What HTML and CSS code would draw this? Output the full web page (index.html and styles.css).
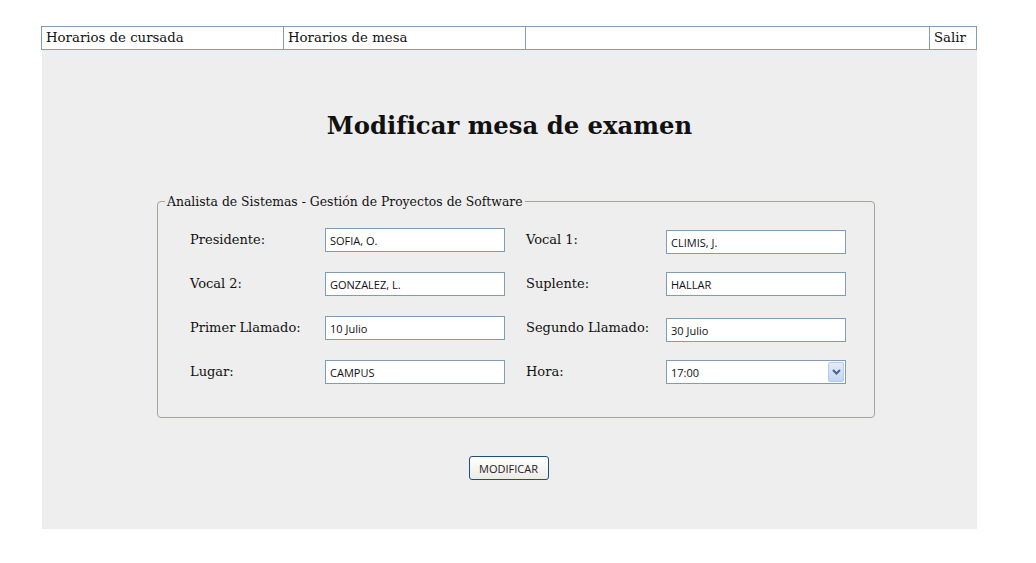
FILE: index.html
```html
<!DOCTYPE html>
<html lang="es">
<head>
<meta charset="utf-8">
<title>Modificar mesa de examen</title>
<link rel="stylesheet" href="styles.css">
</head>
<body>
<div class="page">
  <table class="nav">
    <tr>
      <td class="c1">Horarios de cursada</td>
      <td class="c2">Horarios de mesa</td>
      <td class="c3"></td>
      <td class="c4">Salir</td>
    </tr>
  </table>
  <div class="panel">
    <h1 class="title">Modificar mesa de examen</h1>
    <fieldset class="box">
      <legend class="legend">Analista de Sistemas - Gestión de Proyectos de Software</legend>
      <div class="grid">
        <div class="lbl">Presidente:</div>
        <div class="cell"><input class="inp" type="text" value="SOFIA, O."></div>
        <div class="lbl">Vocal 1:</div>
        <div class="cell down"><input class="inp" type="text" value="CLIMIS, J."></div>

        <div class="lbl">Vocal 2:</div>
        <div class="cell"><input class="inp" type="text" value="GONZALEZ, L."></div>
        <div class="lbl">Suplente:</div>
        <div class="cell"><input class="inp" type="text" value="HALLAR"></div>

        <div class="lbl">Primer Llamado:</div>
        <div class="cell"><input class="inp" type="text" value="10 Julio"></div>
        <div class="lbl">Segundo Llamado:</div>
        <div class="cell down"><input class="inp" type="text" value="30 Julio"></div>

        <div class="lbl">Lugar:</div>
        <div class="cell"><input class="inp" type="text" value="CAMPUS"></div>
        <div class="lbl">Hora:</div>
        <div class="cell">
          <div class="sel">
            <span class="sel-val">17:00</span>
            <span class="sel-btn"><svg width="9" height="6" viewBox="0 0 9 6"><path d="M1 1 L4.5 4.5 L8 1" fill="none" stroke="#4d6185" stroke-width="2"/></svg></span>
          </div>
        </div>
      </div>
    </fieldset>
    <div class="actions">
      <button class="btn" type="button">MODIFICAR</button>
    </div>
  </div>
</div>
</body>
</html>
```
FILE: styles.css
```css
html, body {
  margin: 0;
  padding: 0;
  background: #ffffff;
}
body {
  font-family: "DejaVu Serif", "Liberation Serif", serif;
  color: #111;
}
.page {
  width: 936px;
  margin: 26px 0 0 41px;
}
.nav {
  width: 936px;
  border-collapse: collapse;
  table-layout: fixed;
}
.nav td {
  border: 1px solid #7f9db9;
  height: 22px;
  padding: 0 0 0 4px;
  font-size: 13.3px;
  line-height: 22px;
  vertical-align: middle;
  color: #111;
  white-space: nowrap;
}
.nav .c1 { width: 237px; }
.nav .c2 { width: 237px; }
.nav .c3 { width: 399px; }
.nav .c4 { width: auto; }
.panel {
  background: #eeeeee;
  margin-left: 1px;
  height: 479px;
  padding-top: 1px;
  box-sizing: border-box;
}
.title {
  margin: 59px 0 0 0;
  text-align: center;
  font-size: 24.3px;
  line-height: 32px;
  font-weight: bold;
  color: #111;
}
.box {
  margin: 52px 0 0 115px;
  width: 718px;
  box-sizing: border-box;
  border: 1px solid #a5a59b;
  border-radius: 4px;
  padding: 19px 0 0 0;
  height: 224px;
}
.legend {
  font-size: 12.4px;
  padding: 0 2px;
  margin-left: 7px;
  color: #111;
}
.grid {
  display: grid;
  grid-template-columns: 135px 201px 140px 180px;
  grid-auto-rows: 44px;
  padding-left: 32px;
}
.lbl {
  font-size: 13px;
  line-height: 24px;
  color: #111;
  white-space: nowrap;
}
.cell {
  height: 24px;
}
.cell.down { padding-top: 2px; }
.inp {
  display: block;
  width: 180px;
  height: 24px;
  box-sizing: border-box;
  border: 1px solid #7f9db9;
  background: #fff;
  font-family: "Open Sans", "DejaVu Sans", sans-serif;
  font-size: 11px;
  padding: 0 4px;
  color: #111;
  margin: 0;
  outline: none;
}
.sel {
  width: 180px;
  height: 24px;
  box-sizing: border-box;
  border: 1px solid #7f9db9;
  background: #fff;
  display: flex;
  align-items: center;
  justify-content: space-between;
  font-family: "Open Sans", "DejaVu Sans", sans-serif;
  font-size: 11px;
  padding: 0 1px 0 4px;
  color: #111;
}
.sel-btn {
  width: 16px;
  height: 20px;
  box-sizing: border-box;
  border: 1px solid #b8cbea;
  border-radius: 2px;
  background: linear-gradient(#e3ecfd, #c3d4f6);
  display: flex;
  align-items: center;
  justify-content: center;
}
.actions {
  display: flex;
  justify-content: center;
  margin-top: 38px;
}
.btn {
  width: 80px;
  height: 24px;
  border: 1px solid #1c4d84;
  border-radius: 3px;
  background: linear-gradient(#ffffff, #ecebe4);
  font-family: "Open Sans", "DejaVu Sans", sans-serif;
  font-size: 11px;
  color: #222;
  padding: 0;
  position: relative;
  left: -1px;
}
```
